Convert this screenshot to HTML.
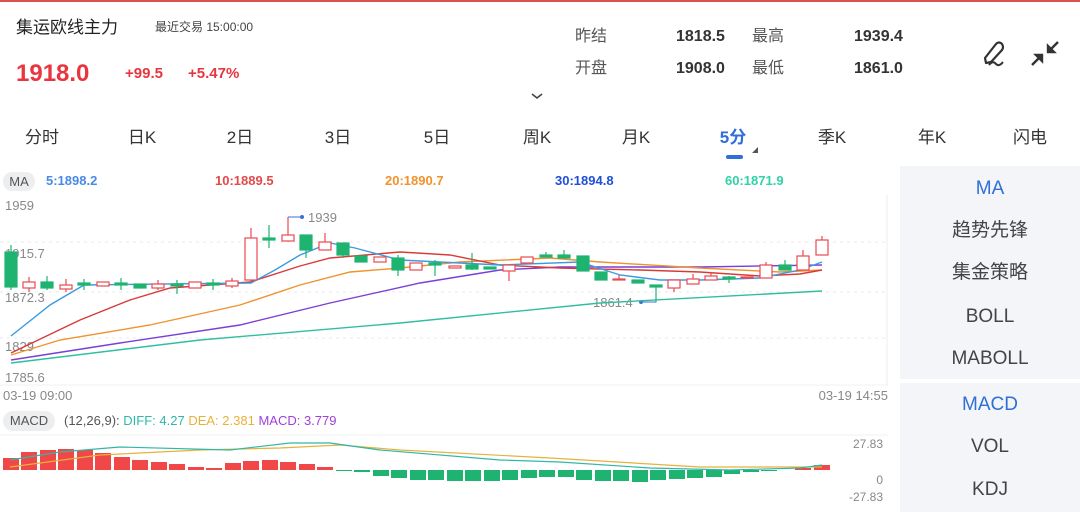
<!DOCTYPE html>
<html><head><meta charset="utf-8"><style>
*{margin:0;padding:0;box-sizing:border-box}
body{width:1080px;height:512px;overflow:hidden;background:#fff;font-family:"Liberation Sans","Noto Sans CJK SC",sans-serif;position:relative;color:#333}
.a{position:absolute;white-space:nowrap}
.st{position:absolute;white-space:nowrap;height:20px;line-height:20px;font-size:16px}
.tab{position:absolute;top:128px;height:20px;line-height:20px;font-size:17px;color:#333;transform:translateX(-50%)}
.side{position:absolute;left:900px;width:180px;background:#f3f5f8}
.si{position:absolute;left:0;width:180px;text-align:center;font-size:19px;color:#444;height:24px;line-height:24px}
.mav{position:absolute;top:173px;font-size:13px;font-weight:bold}
</style></head><body>
<div class="a" style="left:0;top:0;width:1080px;height:2px;background:#d9534f"></div>
<div class="a" style="left:16px;top:18px;font-size:17px;line-height:20px;color:#222">集运欧线主力</div>
<div class="a" style="left:155px;top:19px;font-size:12px;line-height:16px;color:#444">最近交易 15:00:00</div>
<div class="a" style="left:16px;top:60px;font-size:24px;line-height:28px;font-weight:bold;color:#e8353f">1918.0</div>
<div class="a" style="left:125px;top:65px;font-size:15px;font-weight:bold;color:#e8353f">+99.5</div>
<div class="a" style="left:188px;top:65px;font-size:15px;font-weight:bold;color:#e8353f">+5.47%</div>
<div class="st" style="left:575px;top:27px;color:#555">昨结</div>
<div class="st" style="left:676px;top:27px;font-weight:bold">1818.5</div>
<div class="st" style="left:752px;top:27px;color:#555">最高</div>
<div class="st" style="left:854px;top:27px;font-weight:bold">1939.4</div>
<div class="st" style="left:575px;top:59px;color:#555">开盘</div>
<div class="st" style="left:676px;top:59px;font-weight:bold">1908.0</div>
<div class="st" style="left:752px;top:59px;color:#555">最低</div>
<div class="st" style="left:854px;top:59px;font-weight:bold">1861.0</div>
<svg class="a" style="left:975px;top:38px" width="100" height="32" viewBox="0 0 100 32">
<path d="M10 20 L21 6 Q24 3 27 6 Q29 9 27 12 L16 24 L11 25 Z" fill="none" stroke="#333" stroke-width="2.2" stroke-linejoin="round"/>
<path d="M14 27 Q18 22 21 26 Q24 29 28 24" fill="none" stroke="#333" stroke-width="2"/>
<path d="M57 27 L66 18 M61 17 L67 17 L67 23 Z" stroke="#333" stroke-width="2.4" fill="#333"/>
<path d="M83 4 L74 13 M79 14 L73 14 L73 8 Z" stroke="#333" stroke-width="2.4" fill="#333"/>
</svg>
<svg class="a" style="left:530px;top:92px" width="14" height="8"><path d="M2 2 L7 6 L12 2" fill="none" stroke="#444" stroke-width="1.6"/></svg>
<div class="tab" style="left:42px">分时</div>
<div class="tab" style="left:142px">日K</div>
<div class="tab" style="left:240px">2日</div>
<div class="tab" style="left:338px">3日</div>
<div class="tab" style="left:437px">5日</div>
<div class="tab" style="left:537px">周K</div>
<div class="tab" style="left:636px">月K</div>
<div class="tab" style="left:733px;color:#2f6fd6;font-weight:bold">5分</div>
<div class="tab" style="left:832px">季K</div>
<div class="tab" style="left:932px">年K</div>
<div class="tab" style="left:1030px">闪电</div>
<div class="a" style="left:726px;top:155px;width:17px;height:4px;border-radius:2px;background:#2f6fd6"></div>
<svg class="a" style="left:751px;top:146px" width="8" height="8"><path d="M7 1 L7 7 L1 7 Z" fill="#555"/></svg>

<div class="a" style="left:3px;top:172px;width:32px;height:19px;border-radius:9px;background:#eceef0;font-size:13px;color:#555;text-align:center;line-height:19px">MA</div>
<div class="mav" style="left:46px;color:#4a8ae6">5:1898.2</div>
<div class="mav" style="left:215px;color:#e24a4a">10:1889.5</div>
<div class="mav" style="left:385px;color:#f0922e">20:1890.7</div>
<div class="mav" style="left:555px;color:#1f4fd8">30:1894.8</div>
<div class="mav" style="left:725px;color:#2fd3a8">60:1871.9</div>

<svg class="a" style="left:0;top:192px" width="900" height="320" viewBox="0 192 900 320">
<g stroke="#e6e8eb" stroke-dasharray="3 4" stroke-width="1">
<line x1="0" y1="242" x2="888" y2="242"/><line x1="0" y1="292" x2="888" y2="292"/><line x1="0" y1="338" x2="888" y2="338"/>
</g>
<line x1="887" y1="195" x2="887" y2="385" stroke="#eee"/>
<line x1="0" y1="385" x2="888" y2="385" stroke="#f0f0f0"/>
<g font-size="13" fill="#888" font-family="Liberation Sans">
<text x="5" y="210">1959</text><text x="5" y="258">1915.7</text><text x="5" y="302">1872.3</text><text x="5" y="351">1829</text><text x="5" y="382">1785.6</text>
<text x="3" y="400">03-19 09:00</text><text x="888" y="400" text-anchor="end">03-19 14:55</text>
<text x="308" y="222">1939</text><text x="593" y="307">1861.4</text>
</g>
<path d="M288 217 L302 217" stroke="#3d6fd6" fill="none"/><circle cx="302" cy="217" r="2" fill="#3d6fd6"/>
<path d="M656 287 L656 302 L641 302" stroke="#3d6fd6" fill="none"/><circle cx="641" cy="302" r="2" fill="#3d6fd6"/>
<g fill="none" stroke-width="1.4">
<polyline stroke="#2fbfa0" points="11,363 200,340 400,323 600,303 822,291"/>
<polyline stroke="#7a3fd6" points="11,360 120,343 240,325 330,303 420,283 500,270 560,267 700,267 822,265"/>
<polyline stroke="#f0922e" points="11,355 60,340 150,325 240,305 300,285 350,272 400,268 460,262 550,258 600,262 700,268 780,272 822,270"/>
<polyline stroke="#d83a3a" points="11,353 80,320 130,300 170,288 250,282 300,266 330,258 400,252 450,255 500,265 560,268 640,270 700,272 760,276 800,274 822,270"/>
<polyline stroke="#3d9ae0" points="11,336 50,305 84,285 251,283 275,270 300,255 330,243 355,248 400,260 500,265 580,262 620,275 660,280 700,280 760,278 800,270 822,262"/>
</g>
<g stroke-width="1.2">
<g fill="#1fb371" stroke="#1fb371">
<line x1="11" y1="245" x2="11" y2="290"/><rect x="5" y="252" width="12" height="35"/>
<line x1="47" y1="276" x2="47" y2="290"/><rect x="41" y="282" width="12" height="6"/>
<line x1="84" y1="279" x2="84" y2="290"/><rect x="78" y="283" width="12" height="2"/>
<line x1="121" y1="278" x2="121" y2="290"/><rect x="115" y="283" width="12" height="2"/>
<rect x="134" y="284" width="12" height="4"/>
<line x1="177" y1="280" x2="177" y2="294"/><rect x="171" y="284" width="12" height="2"/>
<line x1="213" y1="279" x2="213" y2="290"/><rect x="207" y="283" width="12" height="2"/>
<line x1="269" y1="225" x2="269" y2="248"/><rect x="263" y="238" width="12" height="2"/>
<line x1="306" y1="235" x2="306" y2="258"/><rect x="300" y="235" width="12" height="15"/>
<line x1="343" y1="243" x2="343" y2="258"/><rect x="337" y="243" width="12" height="12"/>
<rect x="355" y="256" width="12" height="6"/>
<line x1="398" y1="255" x2="398" y2="276"/><rect x="392" y="258" width="12" height="12"/>
<line x1="435" y1="260" x2="435" y2="276"/><rect x="429" y="263" width="12" height="2"/>
<line x1="472" y1="253" x2="472" y2="270"/><rect x="466" y="265" width="12" height="4"/>
<rect x="484" y="267" width="12" height="2"/>
<line x1="546" y1="252" x2="546" y2="257"/><rect x="540" y="255" width="12" height="2"/>
<line x1="564" y1="250" x2="564" y2="258"/><rect x="558" y="255" width="12" height="3"/>
<rect x="577" y="256" width="12" height="15"/>
<rect x="595" y="272" width="12" height="8"/>
<rect x="632" y="280" width="12" height="3"/>
<line x1="656" y1="285" x2="656" y2="302"/><rect x="650" y="285" width="12" height="2"/>
<line x1="729" y1="276" x2="729" y2="283"/><rect x="723" y="277" width="12" height="2"/>
<line x1="785" y1="260" x2="785" y2="270"/><rect x="779" y="265" width="12" height="5"/>
</g>
<g fill="#fff" stroke="#e8494f">
<line x1="29" y1="277" x2="29" y2="292"/><rect x="23" y="282" width="12" height="6"/>
<line x1="66" y1="279" x2="66" y2="292"/><rect x="60" y="285" width="12" height="4"/>
<rect x="97" y="282" width="12" height="4"/>
<line x1="158" y1="280" x2="158" y2="290"/><rect x="152" y="284" width="12" height="4"/>
<rect x="189" y="282" width="12" height="6"/>
<line x1="232" y1="278" x2="232" y2="288"/><rect x="226" y="281" width="12" height="5"/>
<line x1="251" y1="228" x2="251" y2="282"/><rect x="245" y="238" width="12" height="42"/>
<line x1="288" y1="217" x2="288" y2="235"/><rect x="282" y="235" width="12" height="6"/>
<line x1="325" y1="233" x2="325" y2="242"/><rect x="319" y="242" width="12" height="8"/>
<rect x="374" y="257" width="12" height="5"/>
<rect x="410" y="263" width="12" height="7"/>
<rect x="449" y="266" width="12" height="2"/>
<line x1="509" y1="265" x2="509" y2="281"/><rect x="503" y="265" width="12" height="6"/>
<rect x="521" y="257" width="12" height="6"/>
<line x1="619" y1="275" x2="619" y2="280"/><rect x="613" y="279" width="12" height="1"/>
<line x1="674" y1="280" x2="674" y2="292"/><rect x="668" y="280" width="12" height="8"/>
<line x1="693" y1="274" x2="693" y2="284"/><rect x="687" y="279" width="12" height="5"/>
<line x1="711" y1="272" x2="711" y2="280"/><rect x="705" y="276" width="12" height="4"/>
<rect x="741" y="277" width="12" height="1"/>
<line x1="766" y1="262" x2="766" y2="278"/><rect x="760" y="265" width="12" height="13"/>
<line x1="803" y1="250" x2="803" y2="270"/><rect x="797" y="256" width="12" height="14"/>
<line x1="822" y1="236" x2="822" y2="255"/><rect x="816" y="240" width="12" height="15"/>
</g>
</g>
<line x1="0" y1="435" x2="888" y2="435" stroke="#f2f2f2"/>
<g font-size="12" fill="#888" font-family="Liberation Sans">
<text x="883" y="448" text-anchor="end">27.83</text><text x="883" y="484" text-anchor="end">0</text><text x="883" y="501" text-anchor="end">-27.83</text>
</g>
<g fill="#f04848">
<rect x="3" y="458" width="16" height="12"/><rect x="21" y="452" width="16" height="18"/><rect x="40" y="450" width="16" height="20"/><rect x="58" y="449" width="16" height="21"/><rect x="77" y="450" width="16" height="20"/><rect x="95" y="453" width="16" height="17"/><rect x="114" y="457" width="16" height="13"/><rect x="132" y="460" width="16" height="10"/><rect x="151" y="462" width="16" height="8"/><rect x="169" y="464" width="16" height="6"/><rect x="188" y="467" width="16" height="3"/><rect x="206" y="468" width="16" height="2"/><rect x="225" y="463" width="16" height="7"/><rect x="243" y="461" width="16" height="9"/><rect x="262" y="460" width="16" height="10"/><rect x="280" y="462" width="16" height="8"/><rect x="299" y="464" width="16" height="6"/><rect x="317" y="467" width="16" height="3"/>
<rect x="795" y="468" width="16" height="2"/><rect x="814" y="465" width="16" height="5"/>
</g>
<g fill="#1fb371">
<rect x="336" y="470" width="16" height="1"/><rect x="354" y="470" width="16" height="2"/><rect x="373" y="470" width="16" height="6"/><rect x="391" y="470" width="16" height="8"/><rect x="410" y="470" width="16" height="10"/><rect x="428" y="470" width="16" height="10"/><rect x="447" y="470" width="16" height="11"/><rect x="465" y="470" width="16" height="11"/><rect x="484" y="470" width="16" height="11"/><rect x="502" y="470" width="16" height="10"/><rect x="521" y="470" width="16" height="8"/><rect x="539" y="470" width="16" height="7"/><rect x="558" y="470" width="16" height="7"/><rect x="576" y="470" width="16" height="10"/><rect x="595" y="470" width="16" height="11"/><rect x="613" y="470" width="16" height="11"/><rect x="632" y="470" width="16" height="12"/><rect x="650" y="470" width="16" height="10"/><rect x="669" y="470" width="16" height="9"/><rect x="687" y="470" width="16" height="8"/><rect x="706" y="470" width="16" height="7"/><rect x="724" y="470" width="16" height="4"/><rect x="743" y="470" width="16" height="2"/><rect x="761" y="470" width="16" height="1"/>
</g>
<polyline fill="none" stroke="#e6b23a" stroke-width="1.2" points="10,467 100,455 200,450 280,448 340,445 400,450 550,458 700,467 822,467"/>
<polyline fill="none" stroke="#2fb8a8" stroke-width="1.2" points="10,460 60,452 120,447 230,450 290,443 330,443 380,450 500,460 560,462 650,468 730,470 800,468 822,465"/>
</svg>
<div class="a" style="left:3px;top:411px;width:52px;height:20px;border-radius:10px;background:#eceef0;font-size:13px;color:#555;text-align:center;line-height:20px">MACD</div>
<div class="a" style="left:64px;top:413px;font-size:13px;color:#555">(12,26,9): <span style="color:#2fb8a8">DIFF: 4.27</span> <span style="color:#e6b23a">DEA: 2.381</span> <span style="color:#a040d8">MACD: 3.779</span></div>

<div class="side" style="top:166px;height:213px"></div>
<div class="side" style="top:383px;height:129px"></div>
<div class="si" style="left:900px;top:177px;color:#2f6fd6">MA</div>
<div class="si" style="left:900px;top:219px">趋势先锋</div>
<div class="si" style="left:900px;top:261px">集金策略</div>
<div class="si" style="left:900px;top:305px">BOLL</div>
<div class="si" style="left:900px;top:347px">MABOLL</div>
<div class="si" style="left:900px;top:393px;color:#2f6fd6">MACD</div>
<div class="si" style="left:900px;top:435px">VOL</div>
<div class="si" style="left:900px;top:478px">KDJ</div>
</body></html>
